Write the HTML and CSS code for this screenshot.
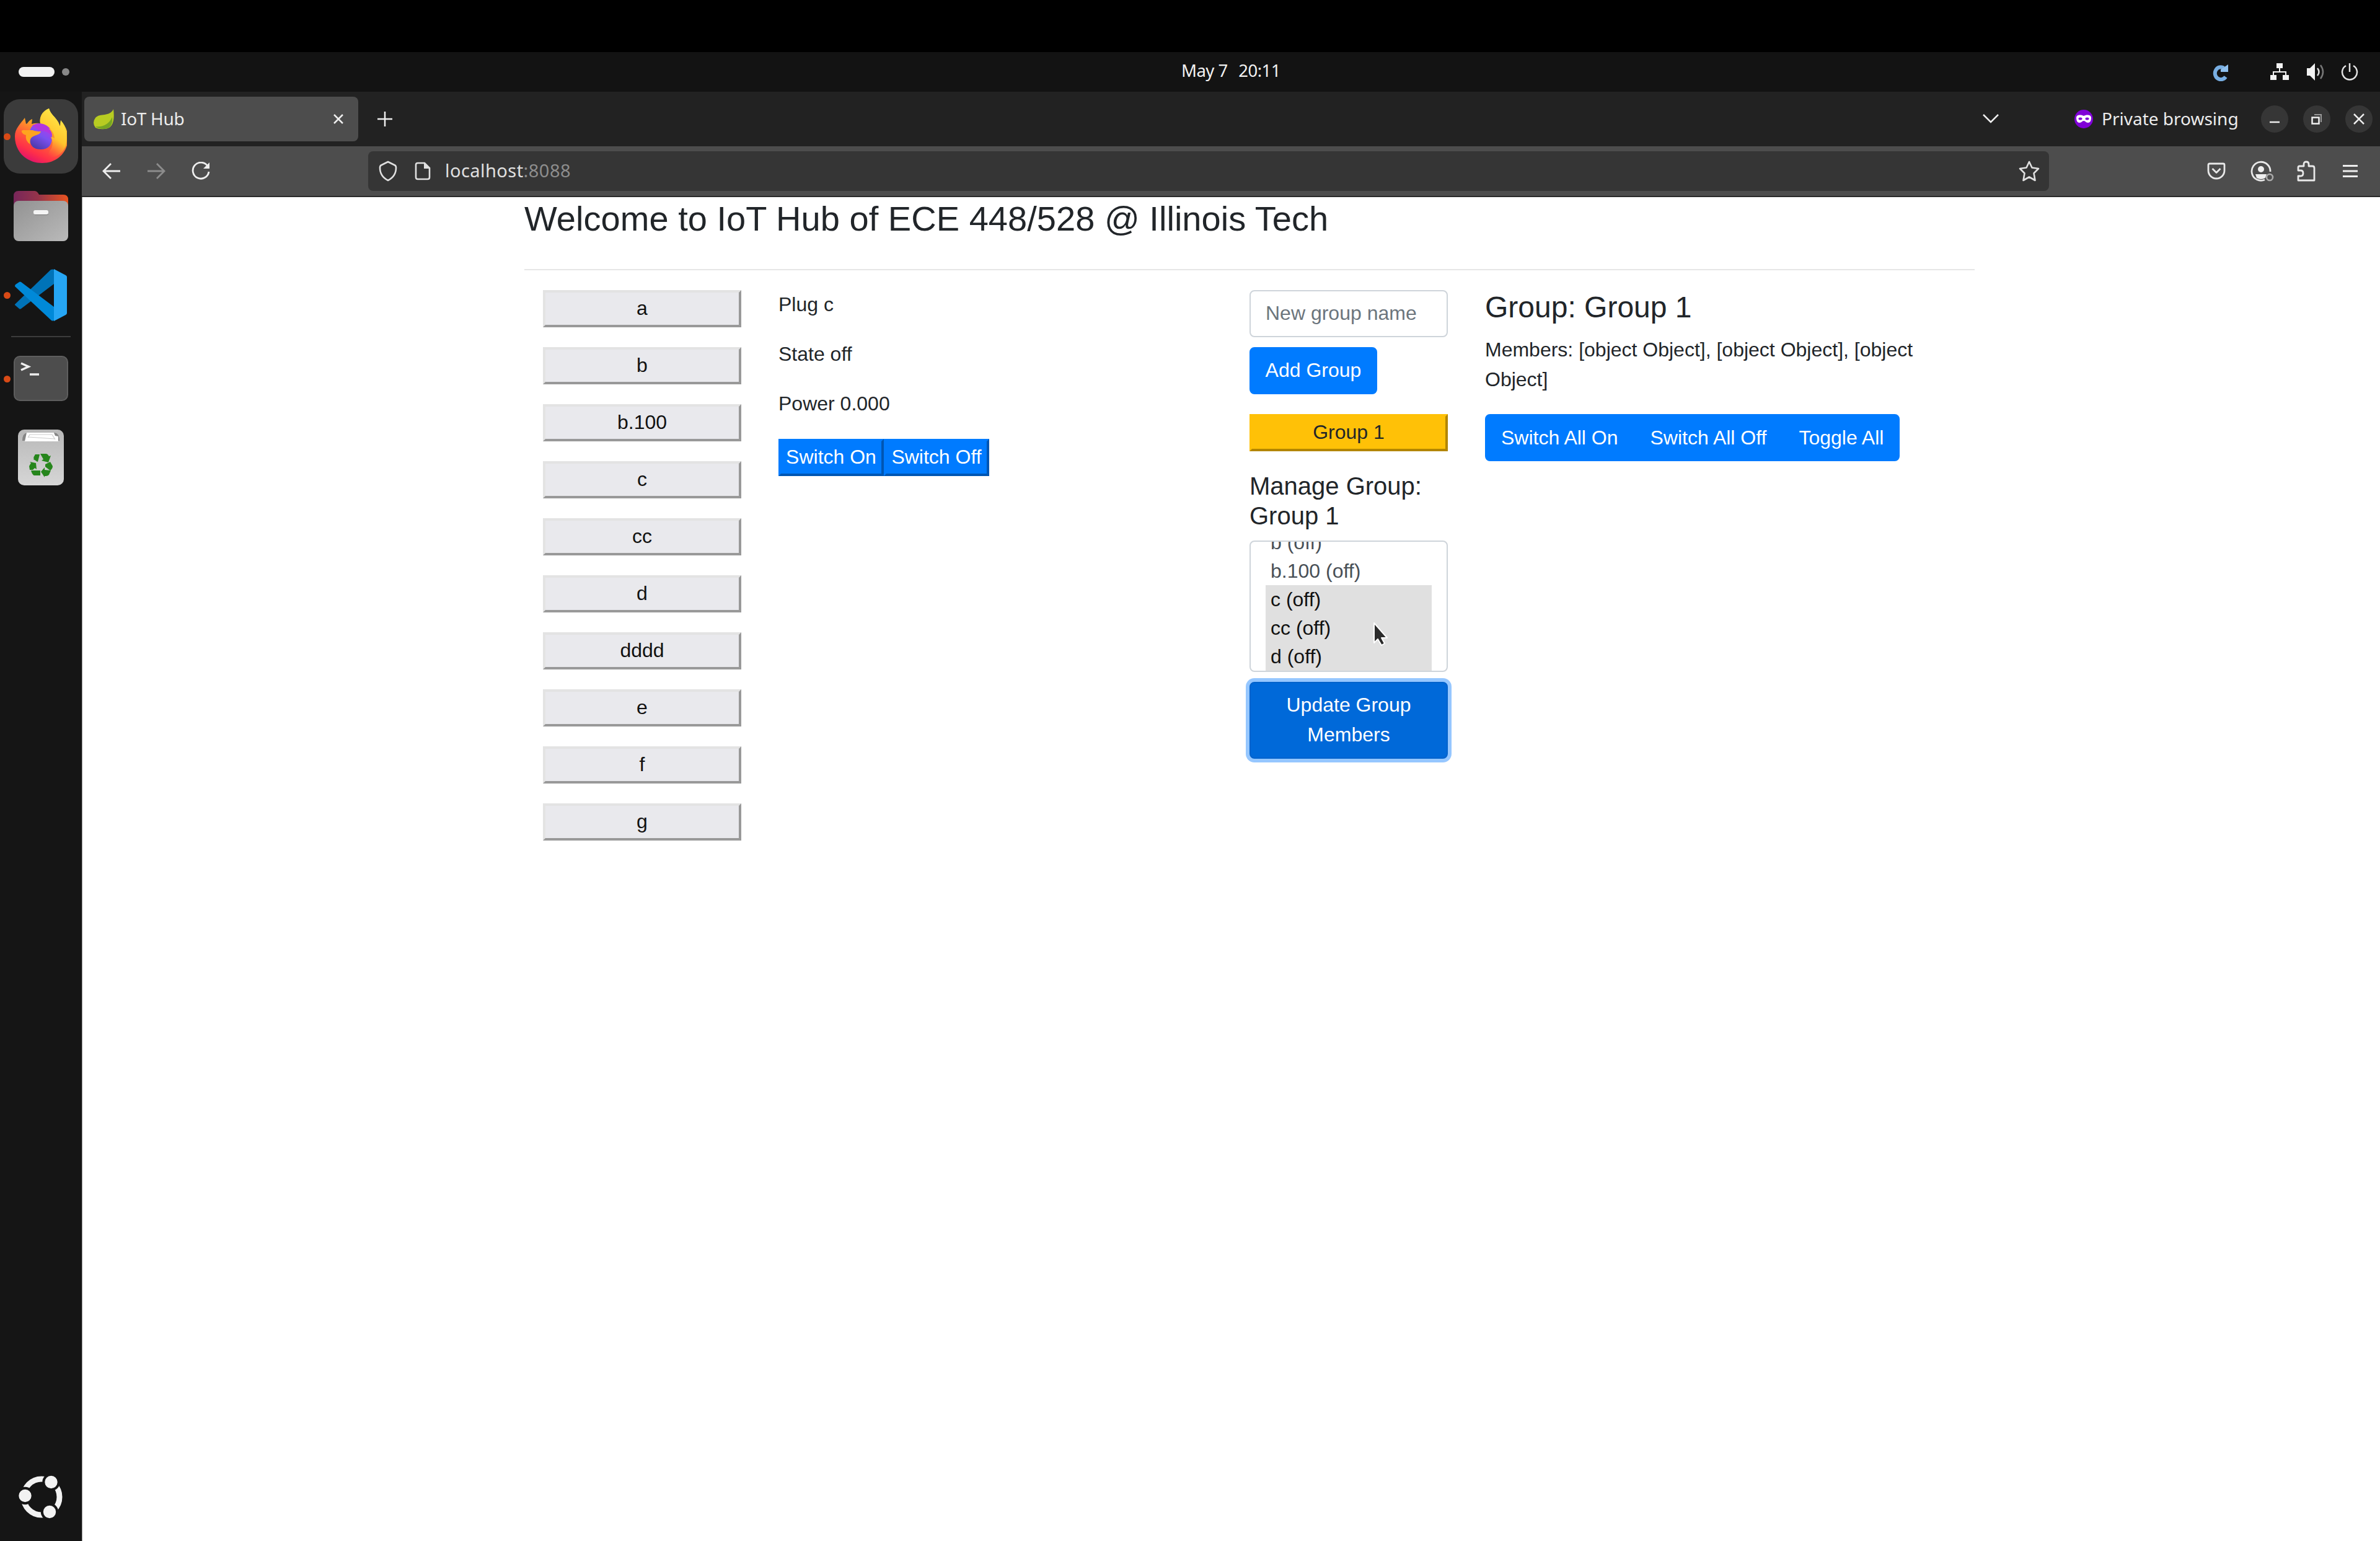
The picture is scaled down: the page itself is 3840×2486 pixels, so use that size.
FILE: index.html
```html
<!DOCTYPE html>
<html lang="en">
<head>
<meta charset="utf-8">
<title>IoT Hub</title>
<link rel="stylesheet" href="styles.css">
</head>
<body>
<header class="panel">
  <div class="workspaces"><span class="pill"></span><span class="dot"></span></div>
  <div class="clock"><span>May 7</span><span>20:11</span></div>
  <div class="tray">
    <svg class="tray-update" width="28" height="28" viewBox="0 0 28 28"><path d="M22 21A9.500 10 0 1 1 19 6.500" fill="none" stroke="#78aee2" stroke-width="6"/><path d="M26 1v12H14V9z" fill="#8fc0ee"/></svg>
    <svg class="tray-net" width="32" height="28" viewBox="0 0 32 28"><path d="M11 0h10v8h-4v5h10v6h4v8H21v-8h4v-4H7v4h4v8H1v-8h4v-6h10V8h-4z" fill="#f2f2f2"/></svg>
    <svg class="tray-vol" width="30" height="30" viewBox="0 0 30 30"><path d="M1 9h5l8-8v28l-8-8H1z" fill="#f2f2f2"/><path d="M18 9q5 6 0 12" fill="none" stroke="#ddd" stroke-width="2.500"/><path d="M23 4q8 11 0 22" fill="none" stroke="#777" stroke-width="2.500"/></svg>
    <svg class="tray-power" width="28" height="28" viewBox="0 0 28 28" fill="none" stroke="#e4e4e4" stroke-width="2.500"><path d="M8 4a12 12 0 1 0 12 0M14 0v14"/></svg>
  </div>
</header>
<div class="desktop">
  <nav class="dock">
    <div class="app firefox active">
      <svg width="84" height="88" viewBox="0 0 84 88">
        <defs>
          <linearGradient id="ff1" x1=".8" y1="0" x2=".3" y2="1"><stop offset=".1" stop-color="#fff04a"/><stop offset=".35" stop-color="#ffae22"/><stop offset=".62" stop-color="#ff5b38"/><stop offset=".82" stop-color="#ff3048"/><stop offset="1" stop-color="#e0106e"/></linearGradient>
          <linearGradient id="ff2" x1=".8" y1="0" x2=".3" y2="1"><stop offset="0" stop-color="#c036e8"/><stop offset=".5" stop-color="#7b50f0"/><stop offset="1" stop-color="#4b3aa8"/></linearGradient>
          <linearGradient id="ff3" x1=".8" y1="0" x2=".4" y2="1"><stop offset="0" stop-color="#fff04f"/><stop offset=".6" stop-color="#ffc52c"/><stop offset="1" stop-color="#ff7139" stop-opacity="0"/></linearGradient>
        </defs>
        <path d="M16 15l2 10 2-1q3-5 8-7l-1 8q6-2 14-1c-2-11 4-20 14-24 3 10 10 13 15 22l3 7 1-10q10 11 12 27c0 24-17 42-42 42S0 70 0 45c0-13 9-20 16-30z" fill="url(#ff1)"/>
        <path d="M24 40q0-16 18-16 15 0 18 9l-6-1q6 6 6 14 0 20-18 20T24 48z" fill="url(#ff2)"/>
        <path d="M28 27q18-8 32 6l-6-1q6 5 6 12-8-9-20-8z" fill="#b136df"/>
        <path d="M55 0c3 10 10 13 15 22l3 7 1-10q14 20 8 42-8 17-25 18c-6-1-2-10 2-15q4-9-1-18 3 0 6 2-1-9-6-14c-5-7-11-9-17-10-2-11 4-20 14-24z" fill="url(#ff3)"/>
        <path d="M11 38q-1-4 6-3h12q4 2 13 2c-2 6-8 5-14 9-4 3-4 8-3 12q-9-6-7-15-5-1-7-5z" fill="#ffa41f"/>
      </svg>
      <i class="running"></i>
    </div>
    <div class="app files">
      <svg width="88" height="82" viewBox="0 0 88 82">
        <defs><linearGradient id="fl1"><stop offset="0" stop-color="#77265a"/><stop offset=".45" stop-color="#96344a"/><stop offset="1" stop-color="#e95420"/></linearGradient><linearGradient id="fl2" x2="1" y2="1"><stop offset="0" stop-color="#929292"/><stop offset="1" stop-color="#bababa"/></linearGradient></defs>
        <path d="M0 40V9q0-8 8-8h26q4 0 7 6h39q8 0 8 8v25z" fill="url(#fl1)"/>
        <rect y="17" width="88" height="65" rx="8" fill="url(#fl2)"/>
        <path d="M37 40h15q4 0 4-2H33q0 2 4 2z" fill="#777"/><rect x="32" y="32" width="24" height="7" rx="3" fill="#f4f4f4"/>
      </svg>
    </div>
    <div class="app code">
      <svg width="84" height="84" viewBox="0 0 84 84">
        <path d="M0 57L58 1q3-1 5 0v23L10 64q-2 1-3 0l-7-6z" fill="#0073b8"/>
        <path d="M7 21q1-1 3 0l53 40v22q-2 1-4 0L0 28q0-2 1-3z" fill="#0089d8"/>
        <path d="M63 0l19 10q2 1 2 3v58q0 2-2 3L63 84z" fill="#26a6f4"/>
      </svg>
      <i class="running"></i>
    </div>
    <div class="separator"></div>
    <div class="app terminal">
      <svg width="88" height="73" viewBox="0 0 88 73"><rect x="1" y="1" width="86" height="71" rx="9" fill="#4d4d4d" stroke="#5e5e5e" stroke-width="2"/><path d="M12 12l12 5.500L12 23" fill="none" stroke="#eee" stroke-width="3.500"/><path d="M26 30h15" stroke="#eee" stroke-width="3.500"/></svg>
      <i class="running"></i>
    </div>
    <div class="app trash">
      <svg width="74" height="90" viewBox="0 0 74 90">
        <defs><linearGradient id="tr1" x2="0" y2="1"><stop offset="0" stop-color="#b8b8b8"/><stop offset="1" stop-color="#d6d6d6"/></linearGradient></defs>
        <rect width="74" height="90" rx="10" fill="url(#tr1)"/><path d="M7 18q0-12 8-13h44q8 1 8 13z" fill="#858585"/><path d="M11 19l3-14h44l2 5 5 1v8z" fill="#fff"/><path d="M16 13l3-5h36l5 8M17 12l42 3" fill="none" stroke="#ccc" stroke-width="1.200"/>
        <g fill="#26861c"><path d="M28 40h7l-3 12-7-4z"/><path d="M25 45l3-5 6 1-3 11z"/><path d="M36 39h9q3 0 5 4l3-1-4 11-11-3 3-2z"/><path d="M44 56l8-4 4 7q0 4-4 7l-8-6z"/><path d="M53 66l-3 7q-2 2-5 2h-2v2l-6-9 6-7v4z"/><path d="M36 66v8H26q-3-1-5-8z"/><path d="M19 52l10 2 1 10-3-2-3 3h-5l-1-6 3-5z"/></g>
      </svg>
    </div>
    <div class="app ubuntu">
      <svg width="72" height="70" viewBox="0 0 72 70">
        <circle cx="37" cy="35" r="29" fill="none" stroke="#f2f2f2" stroke-width="9"/>
        <g fill="#f2f2f2" stroke="#151515" stroke-width="4"><circle cx="10.500" cy="33" r="12.200"/><circle cx="52.500" cy="11" r="12.200"/><circle cx="50" cy="59" r="12.200"/></g>
      </svg>
    </div>
  </nav>
  <div class="browser">
    <div class="tabbar">
      <div class="tab">
        <svg class="favicon" width="34" height="34" viewBox="0 0 34 34"><path d="M32 1q4 31-14 32-9 1-15-2-6-8 0-16C10 7 26 14 32 1z" fill="#b8cc22"/><path d="M3 29q19 2 27-15 2 18-13 19-10 0-14-4z" fill="#76a523"/></svg>
        <span class="tab-title">IoT Hub</span>
        <svg width="18" height="18" viewBox="0 0 18 18" fill="none" stroke="#eee" stroke-width="2.500"><path d="M2 2l14 14M16 2L2 16"/></svg>
      </div>
      <svg class="newtab" width="26" height="26" viewBox="0 0 26 26" fill="none" stroke="#eee" stroke-width="2.500"><path d="M13 1v24M1 13h24"/></svg>
      <svg class="alltabs" width="26" height="16" viewBox="0 0 26 16" fill="none" stroke="#eee" stroke-width="2.500"><path d="M1 1l12 12L25 1"/></svg>
      <svg class="mask" width="30" height="30" viewBox="0 0 30 30"><circle cx="15" cy="15" r="15" fill="#8000d7"/><path d="M3 13c0-6 9-5 12-3 3-2 12-3 12 3 0 5-2 8-5 8-4 0-4-3-7-3s-3 3-7 3c-3 0-5-3-5-8z" fill="#fff"/><ellipse cx="9.500" cy="14.500" rx="3" ry="2" fill="#8000d7"/><ellipse cx="20.500" cy="14.500" rx="3" ry="2" fill="#8000d7"/></svg>
      <span class="private">Private browsing</span>
      <div class="winbtns">
        <span><svg width="44" height="44" viewBox="0 0 44 44"><path d="M14 27h16" stroke="#eee" stroke-width="2.500"/></svg></span>
        <span><svg width="44" height="44" viewBox="0 0 44 44" fill="none"><path d="M18 15h11v12" stroke="#999" stroke-width="2"/><path d="M14.500 19.500h11v10h-11z" stroke="#eee" stroke-width="2.500"/></svg></span>
        <span><svg width="44" height="44" viewBox="0 0 44 44"><path d="M14 14l16 16M30 14L14 30" stroke="#eee" stroke-width="2.500"/></svg></span>
      </div>
    </div>
    <div class="toolbar">
      <svg class="back" width="30" height="26" viewBox="0 0 30 26" fill="none" stroke="#eee" stroke-width="2.800"><path d="M29 13H3M14 1L2 13l12 12"/></svg>
      <svg class="fwd" width="30" height="26" viewBox="0 0 30 26" fill="none" stroke="#8c8c8c" stroke-width="2.800"><path d="M1 13h26M16 1l12 12-12 12"/></svg>
      <svg class="reload" width="30" height="30" viewBox="0 0 30 30"><path d="M26 7A13 13 0 1 0 28 16" fill="none" stroke="#eee" stroke-width="2.800"/><path d="M29 1v10H19z" fill="#eee"/></svg>
      <div class="urlbar">
        <svg class="shield" width="30" height="34" viewBox="0 0 30 34" fill="none" stroke="#e0e0e0" stroke-width="2.600" stroke-linejoin="round"><path d="M15 2l11 5.500q2 1 2 4C28 21 23 28 15 32 7 28 2 21 2 11.500q0-3 2-4z"/></svg>
        <svg class="doc" width="26" height="30" viewBox="0 0 26 30"><path d="M5 2h11l8 8v15q0 3-3 3H5q-3 0-3-3V5q0-3 3-3z" fill="none" stroke="#e0e0e0" stroke-width="2.600"/><path d="M15 1v10h10z" fill="#e0e0e0"/></svg>
        <span class="url">localhost<span class="port">:8088</span></span>
        <svg class="star" width="34" height="34" viewBox="0 0 34 34" fill="none" stroke="#e0e0e0" stroke-width="2.600" stroke-linejoin="round"><path d="M17 2l4.500 9.500 10.500 1.500-7.500 7.500 2 11.500-9.500-5.500L7.500 32l2-11.500L2 13l10.500-1.500z"/></svg>
      </div>
      <svg class="pocket" width="30" height="28" viewBox="0 0 30 28" fill="none" stroke="#e8e8e8" stroke-width="2.800" stroke-linejoin="round"><path d="M4 2h22q2 0 2 2v9a13 13 0 0 1-26 0V4q0-2 2-2z"/><path d="M8.500 10l6.500 6.500 6.500-6.500"/></svg>
      <svg class="account" width="38" height="34" viewBox="0 0 38 34"><path d="M23 31a15 15 0 1 1 9-13" fill="none" stroke="#e8e8e8" stroke-width="2.800"/><circle cx="17" cy="14" r="5" fill="#eee"/><path d="M8 22h18l-2 6q-7 4-14 0z" fill="#eee"/><circle cx="31" cy="27" r="5" fill="none" stroke="#aaa" stroke-width="2.600"/></svg>
      <svg class="puzzle" width="30" height="34" viewBox="0 0 30 34" fill="none" stroke="#e8e8e8" stroke-width="2.800" stroke-linejoin="round"><path d="M2 16v-5q0-2 2-2h7V6q0-4 4-4t4 4v3h6q3 0 3 3v20H2v-7h4q4 0 4-4.500T6 16z"/></svg>
      <svg class="menu" width="26" height="22" viewBox="0 0 26 22" stroke="#eee" stroke-width="2.800"><path d="M1 2.500h24M1 11h24M1 19.500h24"/></svg>
    </div>
    <main class="page">
      <h3 class="title">Welcome to IoT Hub of ECE 448/528 @ Illinois Tech</h3>
      <hr>
      <div class="row">
        <section class="col-2 plugs">
          <button class="plug">a</button><button class="plug">b</button><button class="plug">b.100</button><button class="plug">c</button><button class="plug">cc</button><button class="plug">d</button><button class="plug">dddd</button><button class="plug">e</button><button class="plug">f</button><button class="plug">g</button>
        </section>
        <section class="col-4 details">
          <p>Plug c</p>
          <p>State off</p>
          <p>Power 0.000</p>
          <div class="switches"><button class="plug primary">Switch On</button><button class="plug primary">Switch Off</button></div>
        </section>
        <section class="col-2 groups">
          <input class="control" type="text" placeholder="New group name">
          <button class="btn add">Add Group</button>
          <button class="plug warning">Group 1</button>
          <h5>Manage Group: Group 1</h5>
          <div class="members">
            <div class="option">b (off)</div><div class="option">b.100 (off)</div><div class="option selected">c (off)</div><div class="option selected">cc (off)</div><div class="option selected">d (off)</div>
            <svg class="cursor" width="26" height="42" viewBox="0 0 26 42"><path d="M2 3v32l6-6 6 10 5-3-5-9h9z" fill="#2b2b2b" stroke="#fff" stroke-width="2" stroke-linejoin="round"/></svg>
          </div>
          <button class="btn update">Update Group Members</button>
        </section>
        <section class="col-4">
          <h4>Group: Group 1</h4>
          <p>Members: [object Object], [object Object], [object Object]</p>
          <div class="btn-group"><button class="btn">Switch All On</button><button class="btn">Switch All Off</button><button class="btn">Toggle All</button></div>
        </section>
      </div>
    </main>
  </div>
</div>
</body>
</html>
```
FILE: styles.css
```css
* { box-sizing: border-box; }
body { margin: 0; padding-top: 84px; width: 3840px; height: 2486px; overflow: hidden; background: #000; display: flex; flex-direction: column; font-family: "Liberation Sans", Arial, sans-serif; }
svg { display: block; flex: none; }
button, input { font: inherit; margin: 0; }

/* system panel */
.panel { height: 64px; flex: none; background: #131313; display: grid; grid-template-columns: 1906px 160px 1fr; align-items: center; color: #f2f2f2; font: 27.500px/60px "Noto Sans", sans-serif; }
.workspaces { display: flex; align-items: center; gap: 12px; padding-left: 30px; }
.pill { width: 58px; height: 16px; border-radius: 8px; background: #f2f2f2; }
.dot { width: 12px; height: 12px; border-radius: 50%; background: #888; }
.clock { display: flex; justify-content: space-between; letter-spacing: -.5px; white-space: nowrap; padding-bottom: 4px; }
.tray { display: flex; justify-content: flex-end; align-items: center; padding-right: 35px; }
.tray-update { position: relative; top: 1px; }
.tray-net { margin-left: 65px; }
.tray-vol { margin-left: 27px; }
.tray-power { margin-left: 26px; }

.desktop { flex: 1; display: flex; min-height: 0; }

/* dock */
.dock { width: 132px; background: #151515; display: flex; flex-direction: column; align-items: center; padding: 12px 0 36px; }
.app { position: relative; width: 132px; display: flex; justify-content: center; align-items: center; }
.running { position: absolute; left: 6px; top: 50%; margin-top: -5px; width: 11px; height: 11px; border-radius: 50%; background: #d84a16; }
.firefox { width: 120px; height: 120px; border-radius: 26px; background: #3b3b3b; padding-bottom: 2px; }
.firefox .running { left: 0; }
.files { margin-top: 27px; }
.code { margin-top: 45px; }
.separator { width: 96px; height: 2px; background: #3c3c3c; margin-top: 24px; }
.terminal { margin-top: 30px; }
.trash { margin-top: 46px; }
.ubuntu { margin-top: auto; }

/* browser chrome */
.browser { flex: 1; display: flex; flex-direction: column; border-left: 1px solid #999; background: #fff; min-width: 0; }
.tabbar { height: 88px; flex: none; display: flex; align-items: center; background: #222; padding: 0 12px 0 4px; margin-left: -1px; color: #ececec; font: 28px/40px "Noto Sans", sans-serif; white-space: nowrap; }
.tab { width: 442px; height: 72px; border-radius: 8px; background: #4d4d4d; display: flex; align-items: center; padding: 0 23px 0 15px; }
.tab-title { margin-left: 10px; flex: 1; letter-spacing: -.3px; padding-bottom: 2px; }
.newtab { margin-left: 30px; }
.alltabs { margin-left: auto; }
.mask { margin-left: 122px; }
.private { margin-left: 14px; width: 222px; letter-spacing: 0; padding-bottom: 2px; }
.winbtns { display: flex; gap: 24px; margin-left: 35px; }
.winbtns span { width: 44px; height: 44px; border-radius: 50%; background: #363636; }
.toolbar { height: 82px; flex: none; display: flex; align-items: center; background: #4d4d4d; border-bottom: 2px solid #2a2a2a; margin-left: -1px; padding: 0 35px 0 33px; }
.fwd { margin-left: 42px; }
.reload { margin-left: 42px; }
.urlbar { margin-left: 255px; width: 2712px; height: 64px; border-radius: 8px; background: #353535; display: flex; align-items: center; padding: 0 15px 0 17px; }
.doc { margin-left: 28px; }
.url { margin-left: 23px; flex: 1; font: 29px/40px "Noto Sans", sans-serif; letter-spacing: .45px; padding-bottom: 2px; color: #e0e0e0; }
.port { color: #8d8d8d; }
.pocket { margin-left: auto; }
.account { margin-left: 40px; }
.puzzle { margin-left: 37px; }
.menu { margin-left: 43px; }

/* page */
.page { padding-left: 713px; color: #212529; font-size: 32px; line-height: 48px; }
h3, h4, h5, p { margin: 0; font-weight: 400; }
.title { font-size: 56px; line-height: 69px; letter-spacing: .03px; }
hr { width: 2340px; margin: 47px 0 32px; border: 0; border-top: 2px solid #e6e6e6; }
.row { display: grid; grid-template-columns: 380px 760px 380px 760px; width: 2280px; align-items: start; }
.row > section { padding: 0 30px; }
p { margin-bottom: 32px; }
h4 { font-size: 48px; line-height: 56px; margin-bottom: 16px; }
h5 { font-size: 40px; line-height: 48px; margin-bottom: 16px; }
.details p { line-height: 46px; margin-bottom: 34px; }
.plugs { display: flex; flex-direction: column; gap: 32px; }
.plug { height: 60px; padding: 1px 8px 3px; line-height: 48px; color: #111; background: #e9e9ed; border: 4px solid; border-color: #e3e3e3 #999 #999 #e3e3e3; border-radius: 0; }
.primary { width: 170px; padding: 1px 0 3px; color: #fff; background: #007bff; border-color: #007bff #0056b3 #0056b3 #007bff; white-space: nowrap; }
.warning { width: 320px; margin: 32px 0; color: #212529; background: #ffc107; border-color: #ffc107 #b38600 #b38600 #ffc107; }
.switches, .btn-group { display: flex; }
.groups { display: flex; flex-direction: column; align-items: flex-start; }
.control { width: 320px; height: 76px; padding: 11px 24px 13px; border: 2px solid #ced4da; border-radius: 8px; background: #fff; }
.control::placeholder { color: #6c757d; opacity: 1; }
.btn { padding: 12px 24px; border: 2px solid #007bff; border-radius: 8px; background: #007bff; color: #fff; line-height: 48px; white-space: nowrap; }
.add { width: 206px; margin-top: 16px; padding: 11px 0 13px; }
.members { position: relative; width: 320px; height: 212px; border: 2px solid #ced4da; border-radius: 8px; padding: 0 24px; overflow: hidden; display: flex; flex-direction: column; justify-content: flex-end; }
.option { height: 46px; flex: none; line-height: 46px; padding-left: 8px; color: #495057; }
.selected { background: #e0e0e0; color: #111; }
.cursor { position: absolute; left: 197px; top: 128px; }
.update { margin-top: 16px; width: 320px; padding: 11px 24px 13px; white-space: normal; background: #0069d9; border-color: #0062cc; box-shadow: 0 0 0 6px #96c7ff; }
.btn-group .btn:not(:last-child) { border-top-right-radius: 0; border-bottom-right-radius: 0; }
.btn-group .btn:not(:first-child) { border-top-left-radius: 0; border-bottom-left-radius: 0; }
```
